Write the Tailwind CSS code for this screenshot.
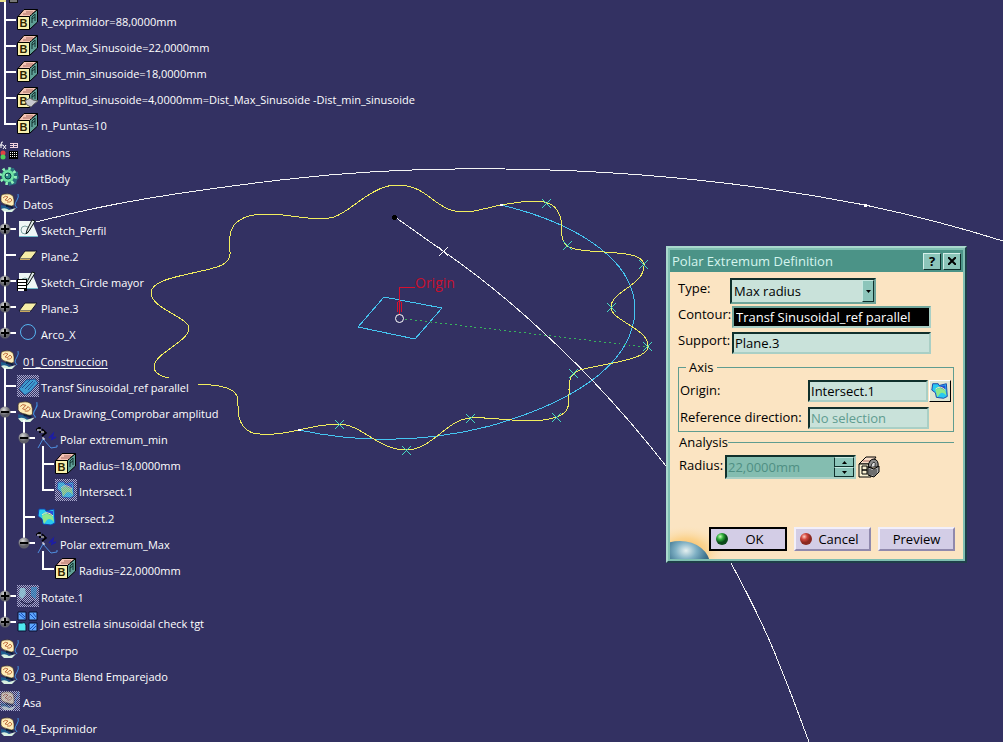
<!DOCTYPE html>
<html lang="es">
<head>
    <meta charset="UTF-8">
    <meta name="viewport" content="width=device-width, initial-scale=1.0">
    <title>Polar Extremum Definition</title>
    <script src="https://cdn.jsdelivr.net/npm/@tailwindcss/browser@4"></script>
</head>
<body class="relative min-h-screen overflow-hidden bg-[#333162] font-['Open_Sans',sans-serif] text-[11px] text-white">

    <!-- Icon sprite -->
    <svg class="invisible absolute size-0" aria-hidden="true">
        <defs>
            <pattern id="mesh" width="2" height="2" patternUnits="userSpaceOnUse">
                <path class="visible" d="M0 0h1v1h-1zM1 1h1v1h-1z" fill="#a9a9cf"/>
            </pattern>
            <radialGradient id="knob" cx="40%" cy="30%">
                <stop offset="0" stop-color="#d8d8d8"/>
                <stop offset="1" stop-color="#5f5f68"/>
            </radialGradient>
            <radialGradient id="led-green" cx="35%" cy="30%">
                <stop offset="0" stop-color="#c9ffb8"/>
                <stop offset=".5" stop-color="#2fae3a"/>
                <stop offset="1" stop-color="#0b4a1a"/>
            </radialGradient>
            <radialGradient id="led-red" cx="35%" cy="30%">
                <stop offset="0" stop-color="#ffd0c4"/>
                <stop offset=".5" stop-color="#d2453c"/>
                <stop offset="1" stop-color="#8a2820"/>
            </radialGradient>
            <radialGradient id="glow">
                <stop offset="0" stop-color="#f8b04a"/>
                <stop offset=".5" stop-color="#fbcf83" stop-opacity=".8"/>
                <stop offset="1" stop-color="#fce5c0" stop-opacity="0"/>
            </radialGradient>
            <radialGradient id="planet" cx="60%" cy="20%">
                <stop offset="0" stop-color="#e5f0f0"/>
                <stop offset=".35" stop-color="#7fb0c4"/>
                <stop offset=".7" stop-color="#3f7590"/>
                <stop offset="1" stop-color="#2b4f66"/>
            </radialGradient>
        </defs>
        <!-- Parameter block -->
        <symbol id="i-block" viewBox="0 0 22 22">
            <path d="M1 7.500 7 .500H20.500L12.500 7.500z" fill="#f4c3b4" stroke="#000"/>
            <path d="M12.500 7.500 20.500 .500V13L12.500 20.500z" fill="#5f9f96" stroke="#000"/>
            <path d="M.500 7.500H12.500V20.500H.500z" fill="#f7efac" stroke="#000"/>
            <path d="M6 5h9M9 3h7" stroke="#a86a60"/>
            <path d="M15 14V8l3-3v7M15 10l3-2" fill="none" stroke="#12302e"/>
            <text x="2.500" y="18" font-family="Liberation Sans" font-weight="700" font-size="11" fill="#2a2200">B</text>
        </symbol>
        <symbol id="i-formula" viewBox="0 0 22 22">
            <use href="#i-block" width="22" height="22"/>
            <path d="M8 14l5-3 3 2 5 1-4 3-3 3-4-2z" fill="#c9c9cf" stroke="#666"/>
        </symbol>
        <symbol id="i-relations" viewBox="0 0 20 20">
            <path d="M3 1Q1 0 1 4V7M0 4H3M3 4l3 4M6 4 3 8" fill="none" stroke="#fff"/>
            <path d="M10 2.500h8M10 6.500h8M10 4.500h3M14 4.500h3M13.500 2v4M17.500 2v4" stroke="#f3d5de"/>
            <rect x="9" y="10" width="9" height="8" fill="#000"/>
            <path d="M10 11.500h8M10 13.500h8M10 15.500h8" stroke="#fff" stroke-dasharray="1 1"/>
            <circle cx="3" cy="12" r="2.500" fill="#e04343"/>
            <circle cx="3" cy="16" r="2.500" fill="#4fd05a"/>
        </symbol>
        <symbol id="i-body" viewBox="0 0 20 20">
            <path d="M11 1h3l1 3 3 1v3l1 3-2 2-1 4-4 1-3 1-1-3z" fill="#286f7d"/>
            <circle cx="8" cy="9" r="6.500" fill="#6fe3a4" stroke="#1f7a6a"/>
            <circle cx="8" cy="9" r="7.500" fill="none" stroke="#8ff0b8" stroke-width="3" stroke-dasharray="2.500 3.400"/>
            <circle cx="8" cy="9" r="3" fill="#2c8c87" stroke="#0b3e46"/>
            <circle cx="7" cy="8" r="1" fill="#d0ffe0"/>
        </symbol>
        <!-- Geometrical set -->
        <symbol id="i-geoset" viewBox="0 0 20 20">
            <path d="M1 12l5 1 5 4-6 1-4-3z" fill="#1d5c8c"/>
            <path d="M1 16q4-2 8 1l7-2-4 4H4z" fill="#d7efe0"/>
            <path d="M6 13q4-1 7 2" stroke="#061f3c" stroke-width="2" fill="none"/>
            <path d="M1 4Q1 1 5 1Q10 0 13 3L14 7V12Q12 14 8 12Q2 11 1 8z" fill="#fdecb8" stroke="#3a2a14" stroke-width=".6"/>
            <path d="M3 5Q5 2 8 4L5 7Q8 9 10 5L12 7Q11 10 7 9" fill="none" stroke="#b4552a" stroke-width=".8"/>
            <path d="M18 1Q19 4 17 7T15 12L17 15" fill="none" stroke="#3f8fe0"/>
        </symbol>
        <!-- Hidden elements are drawn over a mesh -->
        <symbol id="i-geoset-hidden" viewBox="0 0 20 20">
            <rect width="20" height="20" fill="url(#mesh)"/>
            <use href="#i-geoset" width="20" height="20" opacity=".65"/>
            <rect width="20" height="20" fill="url(#mesh)" opacity=".35"/>
        </symbol>
        <symbol id="i-sketch" viewBox="0 0 22 22">
            <path d="M2 3H15L21 18H2z" fill="#eef6f6"/>
            <path d="M2 18.500H21" stroke="#6fb7c8"/>
            <circle cx="8" cy="12" r="4" fill="none" stroke="#7fa3a3"/>
            <path d="M15 2l3 1-6 10-3 3 1-4z" fill="#dfe7e7" stroke="#0a1414"/>
        </symbol>
        <symbol id="i-sketch-list" viewBox="0 0 22 22">
            <use href="#i-sketch" width="22" height="22"/>
            <path d="M0 9h10v12h-10z" fill="#000"/>
            <path d="M1 11h8M1 14h8M1 17h8M1 20h6" stroke="#fff" stroke-width="2"/>
        </symbol>
        <symbol id="i-plane" viewBox="0 0 22 22">
            <path d="M2 15 8 7H20L14 15z" fill="#f6eda6" stroke="#15152c"/>
            <path d="M3 15.500H13" stroke="#c8a85c"/>
        </symbol>
        <symbol id="i-circle" viewBox="0 0 22 22">
            <circle cx="11" cy="10" r="7.500" fill="none" stroke="#56b4f0"/>
        </symbol>
        <symbol id="i-transf" viewBox="0 0 22 22">
            <rect width="22" height="22" fill="url(#mesh)"/>
            <path d="M2 14 9 5l9-1 3 4-7 8-6 4z" fill="#2f9ad0" stroke="#123f86"/>
            <path d="M8 14l8-8M11 15l7-8M5 13l8-8" stroke="#164a90"/>
            <rect width="22" height="22" fill="url(#mesh)" opacity=".25"/>
        </symbol>
        <symbol id="i-polar" viewBox="0 0 22 22">
            <path d="M2 21 7 12 15 21 21 20V18" fill="none" stroke="#4f8fe0"/>
            <path d="M13 11l4-4-1 5 4-2" fill="none" stroke="#1c1ca8" stroke-width="1.600"/>
            <path d="M0 3l4-3v6M3 5h5M6 2l4 4-4 3M4 3v3" fill="none" stroke="#000" stroke-width="1.600"/>
            <path d="M1 3h4M5 5h3M6 11h2v2" fill="none" stroke="#fff"/>
        </symbol>
        <symbol id="i-intersect" viewBox="0 0 22 22">
            <path d="M3 3h6l1 2 8-2 1 14-4 2-8-1-1-5-4-3z" fill="#28c8f0" stroke="#123fa8"/>
            <path d="M10 5h7v4l-4 2z" fill="#2750d8"/>
            <path d="M6 10q6-5 11 1l1 5q-4-5-7-2l-3 4z" fill="#8de88c"/>
            <path d="M6 9q5-5 11 1" fill="none" stroke="#fff59a"/>
        </symbol>
        <symbol id="i-intersect-hidden" viewBox="0 0 22 22">
            <rect width="22" height="22" fill="url(#mesh)"/>
            <use href="#i-intersect" width="22" height="22" opacity=".75"/>
            <rect width="22" height="22" fill="url(#mesh)" opacity=".3"/>
        </symbol>
        <symbol id="i-rotate" viewBox="0 0 22 22">
            <rect width="22" height="22" fill="url(#mesh)"/>
            <path d="M3 3h5l1 6-4 5-3-3z" fill="#8fd0dc" opacity=".85"/>
            <path d="M14 2h6l-1 12-5-3z" fill="#2f7fb8" opacity=".85"/>
            <path d="M4 16q7 6 13 0" fill="none" stroke="#10103a" stroke-width="1.500"/>
            <rect width="22" height="22" fill="url(#mesh)" opacity=".35"/>
        </symbol>
        <symbol id="i-join" viewBox="0 0 22 22">
            <path d="M1 1h8v8H1zM12 1h8v8h-8zM12 12h8v8h-8z" fill="#5fa8ff" stroke="#0a1030"/>
            <path d="M1 12h4q3-2 4 2v6H1z" fill="#4fe8f0" stroke="#0a1030"/>
            <path d="M2 3l6 5M4 2l4 4M13 3l5 5M16 2l3 4M13 18l5-5M15 19l4-4" stroke="#1b4fb8"/>
        </symbol>
        <symbol id="i-plus" viewBox="0 0 12 12">
            <circle cx="6" cy="6" r="5.500" fill="url(#knob)"/>
            <path d="M6 2v8M2 6h8" stroke="#000" stroke-width="2"/>
        </symbol>
        <symbol id="i-minus" viewBox="0 0 12 12">
            <circle cx="6" cy="6" r="5.500" fill="url(#knob)"/>
            <path d="M2 6h8" stroke="#000" stroke-width="2"/>
        </symbol>
    </svg>

    <!-- 3D geometry -->
    <svg class="absolute left-0 top-0 h-[742px] w-[1003px]" viewBox="0 0 1003 742" fill="none" shape-rendering="crispEdges" aria-hidden="true">
        <g stroke="#f4f4f4">
            <path d="M36 222Q95 207 150 198T280 180Q390 167 505 169Q690 171 865 205Q940 221 1003 241"/>
            <path d="M395 217L443 251Q495 287 544 333Q570 357 592 380Q630 420 666 466Q702 513 731 563Q757 611 774 651Q792 695 809 742"/>
        </g>
        <path stroke="#45c6f2" d="M501 205C560 219 634 252 635 309C634 370 560 406 490 426C420 444 355 442 299 430"/>
        <path stroke="#45c6f2" d="M384 297L442 308L415 339L358 327z"/>
        <path stroke="#f2ee5e" d="M397 185C386 185 379 189 370 194C355 203 346 213 334 217C321 221 300 217 283 215C265 213 245 214 236 223C228 231 230 240 230 252C231 266 214 268 197 272C175 277 151 281 151 293C151 308 189 318 189 328C189 342 154 353 154 367C154 373 160 376 169 378"/>
        <path stroke="#f2ee5e" d="M198 384C214 385 233 386 237 396C239 401 237 410 239 417C241 425 247 434 260 434C275 435 285 433 299 430C315 426 327 424 340 424C362 425 379 450 406 450C432 450 446 420 470 418C495 416 530 426 557 417C570 412 569 405 569 390C569 377 571 374 580 370C606 363 649 360 648 346C648 328 611 321 611 307C611 291 646 285 644 264C641 247 583 256 567 246C558 238 564 227 560 216C556 205 549 202 537 201C523 201 513 203 501 205C486 208 475 212 464 212C434 212 430 185 397 185"/>
        <path stroke="#37b35c" stroke-dasharray="2 3" d="M405 319L646 347"/>
        <!-- Extremum points -->
        <g stroke="#45dcc4">
            <path d="M542 199l9 9m0-9l-9 9M563 241l9 9m0-9l-9 9M639 260l9 9m0-9l-9 9M607 303l9 9m0-9l-9 9M643 342l9 9m0-9l-9 9"/>
            <path d="M552 413l9 9m0-9l-9 9M466 414l9 9m0-9l-9 9M402 446l9 9m0-9l-9 9M335 420l9 9m0-9l-9 9M569 369l9 9m0-9l-9 9"/>
        </g>
        <path stroke="#fff" d="M439 247l9 9m0-9l-9 9"/>
        <circle cx="394.500" cy="217.500" r="2.500" fill="#000"/>
        <path d="M500 204h3v2h-3zM298 429h3v2h-3zM864 204h3v3h-3z" fill="#fff"/>
        <path stroke="#d8102e" d="M399.500 315V287.500H415M397.500 312V303L399.500 300L401.500 303V312"/>
        <circle cx="399.500" cy="318.500" r="4" stroke="#fff" shape-rendering="auto"/>
        <text x="415" y="288" font-family="Open Sans" font-size="14" fill="#c8102e">Origin</text>
    </svg>

    <!-- Specification tree -->
    <nav class="relative w-fit pt-[7px] leading-4 whitespace-nowrap" aria-label="Tree">
        <svg class="absolute left-0 top-0 h-[7px] w-5" viewBox="0 0 20 7" aria-hidden="true">
            <path d="M0 0H6V2H0z" fill="#e8e08c"/>
            <path d="M9 0H18V3H9z" fill="#111"/>
            <path d="M10 1h7" stroke="#ddd"/>
            <path d="M4 2h2v5h-2z" fill="#fff"/>
        </svg>
        <ul id="tree"></ul>
    </nav>

    <!-- Polar Extremum dialog -->
    <form class="absolute left-[666px] top-[246px] w-[301px] border-2 border-t-[#a9d8cd] border-r-[#1f3f4a] border-b-[#1f3f4a] border-l-[#a9d8cd] bg-[#fbe4c2] text-[13px] leading-5 text-black" role="dialog" aria-labelledby="dialog-title">
        <div class="border-2 border-[#7fbfb2]">
            <header class="flex h-[22px] items-center gap-[2px] bg-[#4b9387] px-[2px]">
                <h1 id="dialog-title" class="flex-1 text-[#d5f5ee]">Polar Extremum Definition</h1>
                <button type="button" class="flex h-[17px] w-[18px] items-center justify-center border border-t-[#d5f0ea] border-r-[#0f2f2c] border-b-[#0f2f2c] border-l-[#d5f0ea] bg-[#8cc5ba] font-bold leading-none" aria-label="Help">?</button>
                <button type="button" class="flex h-[17px] w-[18px] items-center justify-center border border-t-[#d5f0ea] border-r-[#0f2f2c] border-b-[#0f2f2c] border-l-[#d5f0ea] bg-[#8cc5ba]" aria-label="Close">
                    <svg class="size-2" viewBox="0 0 8 8"><path d="M0 0l8 8M8 0L0 8" stroke="#000" stroke-width="2"/></svg>
                </button>
            </header>

            <div class="pl-2 pr-[9px] pt-[6px]">
                <div class="flex h-[26px] items-start">
                    <label for="type" class="w-[52px]">Type:</label>
                    <div class="relative">
                        <select id="type" class="block h-[26px] w-[146px] appearance-none border-2 border-t-[#10302c] border-r-[#6fa59b] border-b-[#6fa59b] border-l-[#10302c] bg-[#c9e2da] pl-[2px]">
                            <option>Max radius</option>
                            <option>Min radius</option>
                        </select>
                        <span class="pointer-events-none absolute right-[2px] top-[2px] flex h-[22px] w-3 items-center justify-center border border-t-[#c5e8e0] border-r-[#10302c] border-b-[#10302c] border-l-[#c5e8e0] bg-[#8cc5ba]">
                            <svg class="h-[3px] w-[5px]" viewBox="0 0 5 3"><path d="M0 0h5L2.500 3z"/></svg>
                        </span>
                    </div>
                </div>
                <div class="flex h-[26px] items-start">
                    <label for="contour" class="w-[54px]">Contour:</label>
                    <input id="contour" class="mt-[2px] h-[22px] w-[199px] border-2 border-t-[#6fa59b] border-r-[#a9cfc5] border-b-[#a9cfc5] border-l-[#6fa59b] bg-black pl-[2px] text-white" value="Transf Sinusoidal_ref parallel">
                </div>
                <div class="flex h-[27px] items-start">
                    <label for="support" class="w-[54px]">Support:</label>
                    <input id="support" class="mt-[2px] h-[22px] w-[199px] border-2 border-t-[#10302c] border-r-[#a9cfc5] border-b-[#a9cfc5] border-l-[#10302c] bg-[#c9e2da] pl-px" value="Plane.3">
                </div>

                <fieldset class="h-[75px] border border-[#5f9c90]">
                    <legend class="ml-[7px] px-[3px]">Axis</legend>
                    <div class="mt-[3px] flex h-[27px] items-start">
                        <label for="origin" class="w-[129px] pl-px">Origin:</label>
                        <input id="origin" class="h-[22px] w-[120px] border-2 border-t-[#10302c] border-r-[#a9cfc5] border-b-[#a9cfc5] border-l-[#10302c] bg-[#c9e2da] pl-px" value="Intersect.1">
                        <button type="button" class="ml-px flex size-[22px] items-center justify-center border border-t-white border-r-black border-b-black border-l-white bg-[#dfe4d2]" aria-label="Create intersection"><svg class="size-5"><use href="#i-intersect"/></svg></button>
                    </div>
                    <div class="flex h-[22px] items-start">
                        <label for="direction" class="w-[129px] pl-px">Reference direction:</label>
                        <input id="direction" class="h-[22px] w-[121px] border-2 border-t-[#10302c] border-r-[#a9cfc5] border-b-[#a9cfc5] border-l-[#10302c] bg-[#c9e2da] pl-px text-[#5f9c90]" value="No selection">
                    </div>
                </fieldset>

                <div class="flex h-5 items-center">
                    <h2 class="pl-px">Analysis</h2>
                    <span class="h-px flex-1 bg-[#5f9c90]"></span>
                </div>
                <div class="flex items-start pt-[3px]">
                    <label for="radius" class="w-[47px] pl-px">Radius:</label>
                    <div class="flex h-6 w-[131px] border-2 border-t-[#10302c] border-r-[#a9cfc5] border-b-[#a9cfc5] border-l-[#10302c] bg-[#84bdb0]">
                        <input id="radius" class="w-full min-w-0 flex-1 pl-px text-[#4f8f83]" value="22,0000mm" disabled>
                        <div class="flex w-5 flex-col">
                            <button type="button" class="flex flex-1 items-center justify-center border border-t-[#c5e8e0] border-r-[#10302c] border-b-[#10302c] border-l-[#10302c] bg-[#8cc5ba]" aria-label="Increase"><svg class="h-[3px] w-[5px]" viewBox="0 0 5 3"><path d="M0 3h5L2.500 0z"/></svg></button>
                            <button type="button" class="flex flex-1 items-center justify-center border border-t-[#c5e8e0] border-r-[#10302c] border-b-[#10302c] border-l-[#10302c] bg-[#8cc5ba]" aria-label="Decrease"><svg class="h-[3px] w-[5px]" viewBox="0 0 5 3"><path d="M0 0h5L2.500 3z"/></svg></button>
                        </div>
                    </div>
                    <svg class="ml-[2px] mt-px size-[22px]" viewBox="0 0 22 22" aria-hidden="true">
                        <path d="M1 8 8 1H18L13 8z" fill="#f8dfca" stroke="#000"/>
                        <path d="M1 8H13V21H1z" fill="#f7efd0" stroke="#000"/>
                        <path d="M4 10h5v4h-5zM4 14h5v4h-5z" fill="none" stroke="#000"/>
                        <path d="M5 5h8" stroke="#a86a60"/>
                        <path d="M10 11Q11 3 16 3Q21 4 20 11z" fill="#8c8c8c" stroke="#000"/>
                        <path d="M10 11 16 13 21 10V16L16 21 10 19z" fill="#a9a9a9" stroke="#000"/>
                        <path d="M16 13v8M12 13v6M14 14v5M18 13v6" stroke="#333"/>
                        <path d="M13 11q0-4 3-5 2 1 1 4" fill="#ddd" stroke="#333"/>
                    </svg>
                </div>
            </div>

            <footer class="relative mt-[30px] flex h-[50px] items-end justify-end gap-[7px] overflow-hidden pr-2 pb-2">
                <svg class="absolute bottom-0 left-0 h-[34px] w-[60px]" viewBox="0 0 60 34" aria-hidden="true">
                    <ellipse cx="16" cy="26" rx="40" ry="26" fill="url(#glow)"/>
                    <ellipse cx="10" cy="40" rx="30" ry="24" fill="url(#planet)"/>
                </svg>
                <button type="submit" class="relative flex h-6 w-[78px] items-center border-2 border-black bg-[#d3cde6] pl-[5px]">
                    <svg class="size-3" viewBox="0 0 12 12"><circle cx="6" cy="6" r="6" fill="url(#led-green)"/></svg>
                    <span class="flex-1 pr-1 text-center">OK</span>
                </button>
                <button type="button" class="relative flex h-6 w-[77px] items-center border-2 border-t-[#f2effa] border-r-[#9089ad] border-b-[#9089ad] border-l-[#f2effa] bg-[#d3cde6] pl-1">
                    <svg class="size-3" viewBox="0 0 12 12"><circle cx="6" cy="6" r="6" fill="url(#led-red)"/></svg>
                    <span class="flex-1 pr-1 text-center">Cancel</span>
                </button>
                <button type="button" class="relative h-6 w-[77px] border-2 border-t-[#f2effa] border-r-[#9089ad] border-b-[#9089ad] border-l-[#f2effa] bg-[#d3cde6]">Preview</button>
            </footer>
        </div>
    </form>

    <script>
        // icon, label, knob ('plus' / 'minus'), children
        const nodes = [
            { children: [
                { icon: 'block', label: 'R_exprimidor=88,0000mm' },
                { icon: 'block', label: 'Dist_Max_Sinusoide=22,0000mm' },
                { icon: 'block', label: 'Dist_min_sinusoide=18,0000mm' },
                { icon: 'formula', label: 'Amplitud_sinusoide=4,0000mm=Dist_Max_Sinusoide -Dist_min_sinusoide' },
                { icon: 'block', label: 'n_Puntas=10' }
            ] },
            { icon: 'relations', label: 'Relations' },
            { icon: 'body', label: 'PartBody' },
            { icon: 'geoset', label: 'Datos', children: [
                { icon: 'sketch', label: 'Sketch_Perfil', knob: 'plus' },
                { icon: 'plane', label: 'Plane.2' },
                { icon: 'sketch-list', label: 'Sketch_Circle mayor', knob: 'plus' },
                { icon: 'plane', label: 'Plane.3', knob: 'plus' },
                { icon: 'circle', label: 'Arco_X', knob: 'plus' }
            ] },
            { icon: 'geoset', label: '01_Construccion', active: true, children: [
                { icon: 'transf', label: 'Transf Sinusoidal_ref parallel' },
                { icon: 'geoset', label: 'Aux Drawing_Comprobar amplitud', knob: 'minus', children: [
                    { icon: 'polar', label: 'Polar extremum_min', knob: 'minus', children: [
                        { icon: 'block', label: 'Radius=18,0000mm' },
                        { icon: 'intersect-hidden', label: 'Intersect.1' }
                    ] },
                    { icon: 'intersect', label: 'Intersect.2' },
                    { icon: 'polar', label: 'Polar extremum_Max', knob: 'minus', children: [
                        { icon: 'block', label: 'Radius=22,0000mm' }
                    ] }
                ] },
                { icon: 'rotate', label: 'Rotate.1', knob: 'plus' },
                { icon: 'join', label: 'Join estrella sinusoidal check tgt', knob: 'plus' }
            ] },
            { icon: 'geoset', label: '02_Cuerpo' },
            { icon: 'geoset', label: '03_Punta Blend Emparejado' },
            { icon: 'geoset-hidden', label: 'Asa' },
            { icon: 'geoset', label: '04_Exprimidor' }
        ];

        const renderRow = (node, depth) => {
            if (!node.label) return '';
            if (depth === 0) {
                return `<div class="flex h-[26px] items-center gap-[3px]">
                    <svg class="visible size-5"><use href="#i-${node.icon}"/></svg>
                    <span class="${node.active ? 'pt-1 underline underline-offset-2' : 'pt-1'}">${node.label}</span>
                </div>`;
            }
            const knob = node.knob
                ? `<button class="absolute -left-[5px] top-[7px]" aria-label="${node.knob === 'plus' ? 'Expand' : 'Collapse'}"><svg class="size-3"><use href="#i-${node.knob}"/></svg></button>`
                : '';
            return `<div class="flex h-[26px] items-center">
                <span class="h-[2px] w-3 bg-white"></span>${knob}
                <svg class="ml-px size-[22px]"><use href="#i-${node.icon}"/></svg>
                <span class="ml-[2px] pt-1">${node.label}</span>
            </div>`;
        };

        // Each child draws its own piece of the vertical connector line
        const renderNodes = (list, depth) => list.map((node) => {
            const indent = depth === 0 ? 'ml-1' : 'ml-[19px]';
            const children = node.children
                ? `<ul class="mb-px ${indent} *:relative *:before:absolute *:before:-top-[5px] *:before:bottom-0 *:before:left-0 *:before:w-[2px] *:before:bg-white *:before:content-[''] *:last:before:bottom-auto *:last:before:h-[19px]">${renderNodes(node.children, depth + 1)}</ul>`
                : '';
            return `<li>${renderRow(node, depth)}${children}</li>`;
        }).join('');

        document.getElementById('tree').innerHTML = renderNodes(nodes, 0);
    </script>

</body>
</html>
